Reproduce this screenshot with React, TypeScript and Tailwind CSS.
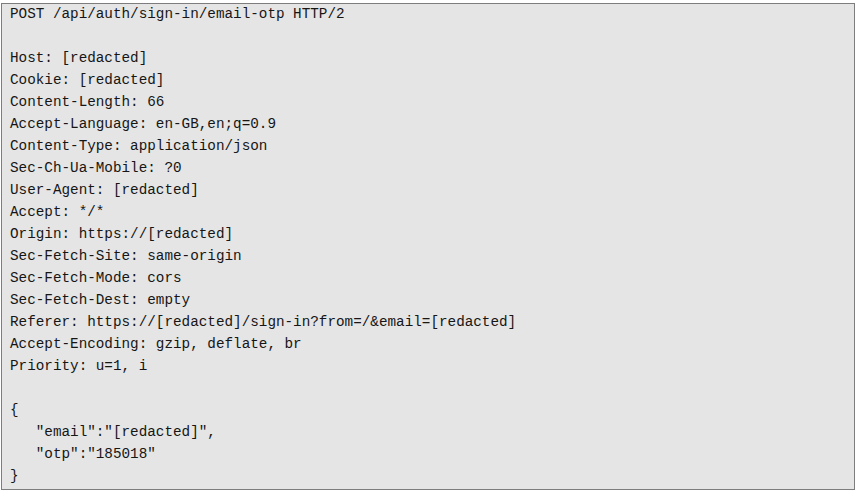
const lines = [
  'POST /api/auth/sign-in/email-otp HTTP/2',
  '',
  'Host: [redacted]',
  'Cookie: [redacted]',
  'Content-Length: 66',
  'Accept-Language: en-GB,en;q=0.9',
  'Content-Type: application/json',
  'Sec-Ch-Ua-Mobile: ?0',
  'User-Agent: [redacted]',
  'Accept: */*',
  'Origin: https://[redacted]',
  'Sec-Fetch-Site: same-origin',
  'Sec-Fetch-Mode: cors',
  'Sec-Fetch-Dest: empty',
  'Referer: https://[redacted]/sign-in?from=/&email=[redacted]',
  'Accept-Encoding: gzip, deflate, br',
  'Priority: u=1, i',
  '',
  '{',
  '   "email":"[redacted]",',
  '   "otp":"185018"',
  '}',
]

export default function App() {
  return (
    <div className="w-[857px] h-[492px] bg-white pt-[3px] pl-[1px]">
      <pre
        className="w-[854px] h-[487px] overflow-hidden border border-[#7d7d7d] bg-[#e5e5e5] pl-[8px] text-[14.3px] leading-[22px] text-[#161616] whitespace-pre"
        style={{ fontFamily: '"Liberation Mono", "DejaVu Sans Mono", monospace' }}
      >
        <div className="-mt-px">
          {lines.map((l, i) => (
            <div key={i} className="h-[22px]">
              {l}
            </div>
          ))}
        </div>
      </pre>
    </div>
  )
}
